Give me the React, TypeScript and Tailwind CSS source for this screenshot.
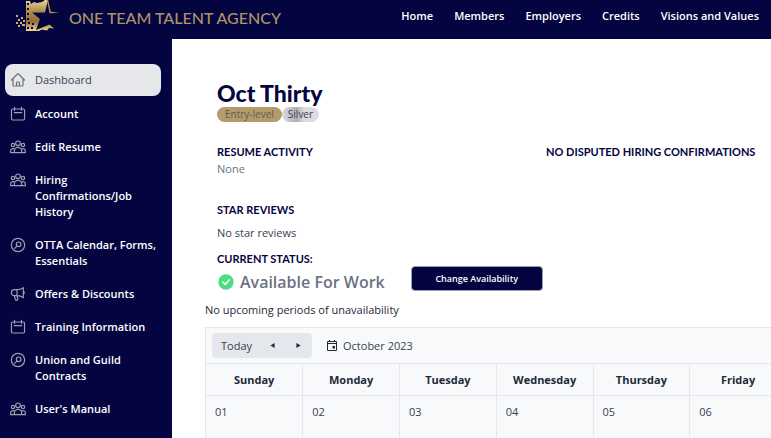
import React from "react";

type IconName = "home" | "calendar" | "group" | "search" | "horn";

const paths: Record<IconName, React.ReactNode> = {
  home: (
    <path d="m2.3 12 8.900-9c.5-.4 1.100-.4 1.600 0l8.900 9M4.500 9.800v10.100c0 .6.5 1.100 1.100 1.100H9.800v-4.900c0-.6.5-1.100 1.100-1.100h2.200c.6 0 1.100.5 1.100 1.100V21h4.200c.6 0 1.100-.5 1.100-1.100V9.800M8 21h8.500" />
  ),
  calendar: (
    <path d="M6.800 2v4.500M17.200 2v4.500M4 4.500h16c1 0 1.800.8 1.800 1.800v13c0 1-.8 1.700-1.800 1.700H4c-1 0-1.800-.7-1.800-1.700v-13c0-1 .8-1.800 1.800-1.800ZM6.500 10h11" />
  ),
  group: (
    <g>
      <circle cx="12" cy="6.500" r="3.500" />
      <circle cx="4.500" cy="9" r="2.500" />
      <circle cx="19.500" cy="9" r="2.500" />
      <path d="M6.500 20.500v-2.500a5.500 5.500 0 0 1 11 0v2.500ZM6.500 20.500H1v-2.500a3.500 3.500 0 0 1 6-2.500M17.500 20.500H23v-2.500a3.500 3.500 0 0 0-6-2.500" />
    </g>
  ),
  search: (
    <g>
      <circle cx="12" cy="12" r="10" />
      <circle cx="13" cy="11" r="3.500" />
      <path d="m10.400 13.600-3.400 3.400" />
    </g>
  ),
  horn: (
    <path d="M10.500 14.500H6.500a4.500 4.500 0 0 1 0-9h4c4 0 7-1.200 9.500-3v15c-2.500-1.800-5.500-3-9.500-3ZM10.500 5.500v9M6.500 14.500c.3 2.500 1 4.500 2 6.500.3.600 1 .8 1.600.5l1.200-.7c.5-.3.700-1 .4-1.500a13 13 0 0 1-1.200-4.800M20 8c1.800.8 1.800 3.200 0 4" />
  ),
};

function Icon({ name }: { name: IconName }) {
  return (
    <svg
      viewBox="0 0 24 24"
      className="size-4 shrink-0"
      fill="none"
      stroke="currentColor"
      strokeWidth="1.8"
      strokeLinecap="round"
      strokeLinejoin="round"
      aria-hidden="true"
    >
      {paths[name]}
    </svg>
  );
}

function Logo() {
  return (
    <svg viewBox="0 0 45 32" className="h-8 w-[45px] shrink-0" aria-hidden="true">
      <defs>
        <linearGradient id="gold" x1="0" y1="0" x2="0" y2="1">
          <stop offset="0" stopColor="#ecd592" />
          <stop offset=".35" stopColor="#b08f4c" />
          <stop offset=".7" stopColor="#8f7036" />
          <stop offset="1" stopColor="#f0d890" />
        </linearGradient>
      </defs>
      <path
        fill="url(#gold)"
        d="M10 1h4l1 3 3-2 3 1 5-1 3-2h3l-3 12.500H16L24 19l-4 11 13.500-5.500 4.500 4-5-.5-2 2.500-5-1-3 1.500H10Z"
      />
      <path fill="#b08f4c" d="M31 0h1.200l2.600 11.500 8.200 1.500-9.500.2z" />
      <path fill="#040440" d="M11 3h2v2h-2zM11 8h2v2h-2zM11 13h2v2h-2zM11 18h2v2h-2zM12 22h2v2h-2zM16 23h2v2h-2zM11 27h2v2h-2zM15 27h2v2h-2z" />
      <path fill="#cdb174" d="M0 15h2v2H0zM5 17h2v2H5zM2 19h2v2H2zM7 20h2v2H7zM0 22h2v2H0zM4 22h2v2H4zM6 24h3v2H6zM2 25h2v2H2z" />
    </svg>
  );
}

const topLinks = ["Home", "Members", "Employers", "Credits", "Visions and Values"];

const sideLinks: { label: string; icon: IconName }[] = [
  { label: "Dashboard", icon: "home" },
  { label: "Account", icon: "calendar" },
  { label: "Edit Resume", icon: "group" },
  { label: "Hiring Confirmations/Job History", icon: "group" },
  { label: "OTTA Calendar, Forms, Essentials", icon: "search" },
  { label: "Offers & Discounts", icon: "horn" },
  { label: "Training Information", icon: "calendar" },
  { label: "Union and Guild Contracts", icon: "search" },
  { label: "User's Manual", icon: "group" },
];

const days = ["Sunday", "Monday", "Tuesday", "Wednesday", "Thursday", "Friday"];
const dates = ["01", "02", "03", "04", "05", "06"];

function SectionTitle({ children }: { children: React.ReactNode }) {
  return (
    <h2 className="font-['Lato',sans-serif] text-[11px] leading-4 font-bold whitespace-nowrap text-[#040440] uppercase">
      {children}
    </h2>
  );
}

export default function App() {
  return (
    <div className="flex h-screen flex-col overflow-hidden bg-[#040440] font-['Open_Sans',sans-serif] text-[11px] leading-4 text-gray-700">
      <header className="flex h-[39px] shrink-0 items-start justify-between pr-3 pl-4">
        <a href="#" className="flex gap-2">
          <Logo />
          <span className="pt-2 font-['Lato',sans-serif] text-base leading-5 font-medium whitespace-nowrap text-[#ad946a]">
            ONE TEAM TALENT AGENCY
          </span>
        </a>
        <nav className="flex gap-[21px] pt-2 font-semibold whitespace-nowrap text-white">
          {topLinks.map((label) => (
            <a key={label} href="#">
              {label}
            </a>
          ))}
        </nav>
      </header>

      <div className="flex min-h-0 flex-1">
        <aside className="w-[172px] shrink-0 pt-[25px] pr-[11px] pl-[5px]">
          <nav className="flex flex-col gap-px">
            {sideLinks.map(({ label, icon }, i) => (
              <a
                key={label}
                href="#"
                className={
                  i === 0
                    ? "mb-px flex gap-[9px] rounded-lg bg-[#e5e7eb] py-2 pl-[5px] text-gray-700"
                    : "flex gap-[9px] rounded-lg py-2 pl-[5px] font-semibold text-white"
                }
              >
                <span className={i === 0 ? "text-gray-500" : "text-gray-400"}>
                  <Icon name={icon} />
                </span>
                <span>{label}</span>
              </a>
            ))}
          </nav>
        </aside>

        <main className="min-w-0 flex-1 overflow-hidden bg-white pt-10 pl-[33px]">
          <div className="pl-3">
            <h1 className="font-['Lato',sans-serif] text-[23px] leading-7 font-black text-[#040440]">
              Oct Thirty
            </h1>
            <div className="flex text-[10px] leading-[15px]">
              <span className="rounded-full bg-[#b39b6c] px-2 text-[#665c4c]">Entry-level</span>
              <span className="rounded-full bg-linear-to-r from-[#dcdcdf] via-[#b0b0b4] via-40% to-[#dcdcdf] to-60% px-[6px] text-gray-700">
                Silver
              </span>
            </div>

            <div className="mt-[22px] grid grid-cols-[329px_1fr]">
              <div>
                <SectionTitle>Resume Activity</SectionTitle>
                <p className="mt-px text-gray-500">None</p>
              </div>
              <SectionTitle>No Disputed Hiring Confirmations</SectionTitle>
            </div>

            <div className="mt-[25px]">
              <SectionTitle>Star Reviews</SectionTitle>
              <p className="mt-[7px]">No star reviews</p>
            </div>

            <div className="mt-[10px] flex gap-[26px]">
              <div>
                <SectionTitle>Current Status:</SectionTitle>
                <p className="mt-[3px] flex items-center gap-[5px] text-base leading-6 font-semibold whitespace-nowrap text-gray-500">
                  <svg viewBox="0 0 20 20" className="size-[18px]" aria-hidden="true">
                    <circle cx="10" cy="10" r="8.500" fill="#4ade80" />
                    <path d="m6.500 10.200 2.500 2.500 4.500-5" fill="none" stroke="white" strokeWidth="1.8" strokeLinecap="round" strokeLinejoin="round" />
                  </svg>
                  Available For Work
                </p>
              </div>
              <button
                type="button"
                className="mt-[15px] h-[25px] w-[132px] rounded border border-gray-400 bg-[#040440] text-[9px] leading-4 font-semibold text-white"
              >
                Change Availability
              </button>
            </div>
          </div>

          <p className="mt-2 text-gray-800">No upcoming periods of unavailability</p>

          <section className="mt-[9px] w-[583px] border border-gray-200 bg-[#f8f9fb]">
            <div className="flex h-[35px] items-center gap-[15px] pl-[6px]">
              <div className="flex h-[25px] items-center rounded bg-[#e4e7eb]">
                <button type="button" className="pl-[9px]">
                  Today
                </button>
                <button type="button" aria-label="Previous month" className="pl-[18px]">
                  <svg viewBox="0 0 6 6" className="size-[5px] fill-gray-800">
                    <path d="M5.500 0v6L.5 3z" />
                  </svg>
                </button>
                <button type="button" aria-label="Next month" className="pr-[11px] pl-[21px]">
                  <svg viewBox="0 0 6 6" className="size-[5px] fill-gray-800">
                    <path d="M.5 0v6l5-3z" />
                  </svg>
                </button>
              </div>
              <button type="button" className="flex items-center gap-[6px]">
                <svg viewBox="0 0 10 11" className="h-[11px] w-[10px]" fill="none" stroke="#1f2937" aria-hidden="true">
                  <path d="M.5 1.500h9v9h-9zM.5 3.500h9M2.500 0v2M7.500 0v2" />
                  <path d="M5.500 6h2.500v2.500H5.500z" fill="#1f2937" stroke="none" />
                </svg>
                October 2023
              </button>
            </div>
            <table className="w-full table-fixed border-collapse">
              <thead>
                <tr className="h-8">
                  {days.map((day) => (
                    <th key={day} className="border border-l-0 border-gray-200 p-0 font-bold text-gray-800">
                      {day}
                    </th>
                  ))}
                </tr>
              </thead>
              <tbody>
                <tr className="h-20 align-top">
                  {dates.map((date) => (
                    <td key={date} className="border border-l-0 border-gray-200 pt-2 pl-[9px]">
                      {date}
                    </td>
                  ))}
                </tr>
              </tbody>
            </table>
          </section>
        </main>
      </div>
    </div>
  );
}
